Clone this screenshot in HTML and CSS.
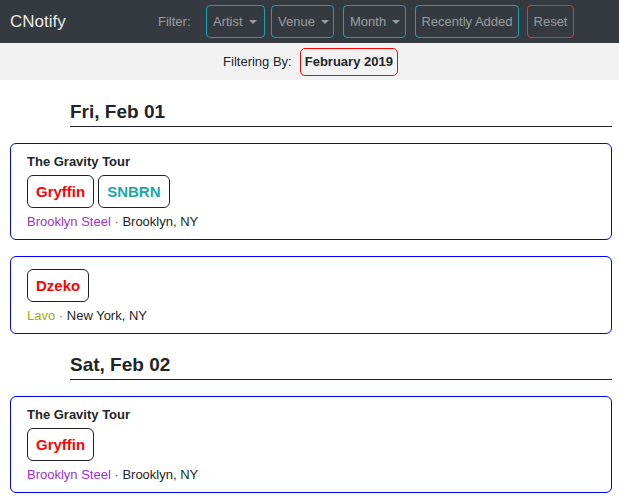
FILE: index.html
```html
<!DOCTYPE html>
<html>
<head>
<meta charset="utf-8">
<title>CNotify</title>
<link rel="stylesheet" href="styles.css">
</head>
<body>
<nav class="navbar">
  <span class="brand">CNotify</span>
  <span class="filter-label">Filter:</span>
  <div class="filters">
    <button class="btn btn-info btn-artist">Artist<span class="caret"></span></button>
    <button class="btn btn-info btn-venue">Venue<span class="caret"></span></button>
    <button class="btn btn-info btn-month">Month<span class="caret"></span></button>
    <button class="btn btn-info btn-recent">Recently Added</button>
    <button class="btn btn-danger">Reset</button>
  </div>
</nav>
<div class="filterbar">
  <span class="filterbar-label">Filtering By:</span>
  <span class="filter-chip">February 2019</span>
</div>
<main class="content">
  <section class="day">
    <h2 class="day-title">Fri, Feb 01</h2>
    <div class="card">
      <div class="event-name">The Gravity Tour</div>
      <div class="artists">
        <span class="artist artist-red">Gryffin</span>
        <span class="artist artist-teal">SNBRN</span>
      </div>
      <div class="location"><span class="venue venue-purple">Brooklyn Steel</span><span class="sep"> · </span>Brooklyn, NY</div>
    </div>
    <div class="card card-notitle">
      <div class="artists">
        <span class="artist artist-red">Dzeko</span>
      </div>
      <div class="location"><span class="venue venue-olive">Lavo</span><span class="sep"> · </span>New York, NY</div>
    </div>
  </section>
  <section class="day">
    <h2 class="day-title">Sat, Feb 02</h2>
    <div class="card">
      <div class="event-name">The Gravity Tour</div>
      <div class="artists">
        <span class="artist artist-red">Gryffin</span>
      </div>
      <div class="location"><span class="venue venue-purple">Brooklyn Steel</span><span class="sep"> · </span>Brooklyn, NY</div>
    </div>
  </section>
</main>
</body>
</html>
```

FILE: styles.css
```css
* { box-sizing: border-box; }
body {
  margin: 0;
  font-family: "Liberation Sans", Arial, sans-serif;
  color: #212529;
  background: #fff;
}
.navbar {
  height: 43px;
  background: #343a40;
  display: flex;
  align-items: center;
  padding: 0 0 0 10px;
}
.brand {
  color: rgba(255,255,255,0.92);
  font-size: 17px;
  width: 148px;
}
.filter-label {
  color: rgba(255,255,255,0.5);
  font-size: 13px;
  width: 48px;
}
.filters {
  display: flex;
  align-items: center;
}
.btn {
  font-family: "Liberation Sans", Arial, sans-serif;
  font-size: 13px;
  line-height: 19px;
  padding: 6px 6px;
  height: 33px;
  background: transparent;
  color: rgba(255,255,255,0.5);
  border: 1px solid #17a2b8;
  border-radius: 4px;
  display: inline-flex;
  align-items: center;
  white-space: nowrap;
}
.btn-danger { border-color: #dc3545; margin-left: 8px; width: 47px; justify-content: center; }
.btn-artist { width: 59px; }
.btn-venue { width: 63px; margin-left: 6px; }
.btn-month { width: 63px; margin-left: 9px; }
.btn-recent { width: 104px; margin-left: 9px; justify-content: center; padding: 6px 4px; }
.caret {
  display: inline-block;
  margin-left: 6px;
  width: 0;
  height: 0;
  border-top: 4px solid rgba(255,255,255,0.5);
  border-left: 4px solid transparent;
  border-right: 4px solid transparent;
}
.filterbar {
  height: 37px;
  background: #f2f2f2;
  display: flex;
  justify-content: center;
  align-items: center;
  font-size: 13px;
  gap: 8px;
  padding-left: 2px;
}
.filter-chip {
  font-weight: bold;
  border: 1px solid #ff0000;
  border-radius: 5px;
  padding: 0 4px;
  height: 28px;
  line-height: 26px;
}
.content {
  padding: 1px 7px 20px 10px;
}
.day { margin-top: 19px; }
.day-title {
  margin: 0 0 16px 60px;
  font-size: 19px;
  line-height: 23px;
  font-weight: bold;
  padding-bottom: 3px;
  border-bottom: 1px solid #212529;
}
.card {
  border: 1px solid #0000ff;
  border-radius: 6px;
  padding: 8px 16px 7px;
  margin-bottom: 16px;
}
.card-notitle { padding-top: 12px; }
.event-name {
  font-size: 13px;
  font-weight: bold;
  line-height: 20px;
  margin-bottom: 3px;
}
.artists {
  display: flex;
  gap: 4px;
  margin-bottom: 4px;
}
.artist {
  border: 1px solid #222;
  border-radius: 6px;
  font-size: 15px;
  font-weight: bold;
  line-height: 21px;
  padding: 5px 8px;
}
.artist-red { color: #ff0000; }
.artist-teal { color: #17a9a9; }
.location {
  font-size: 13px;
  line-height: 20px;
}
.venue-purple { color: #9b30d6; }
.venue-olive { color: #9fb000; }
.sep { color: #666; }
```
